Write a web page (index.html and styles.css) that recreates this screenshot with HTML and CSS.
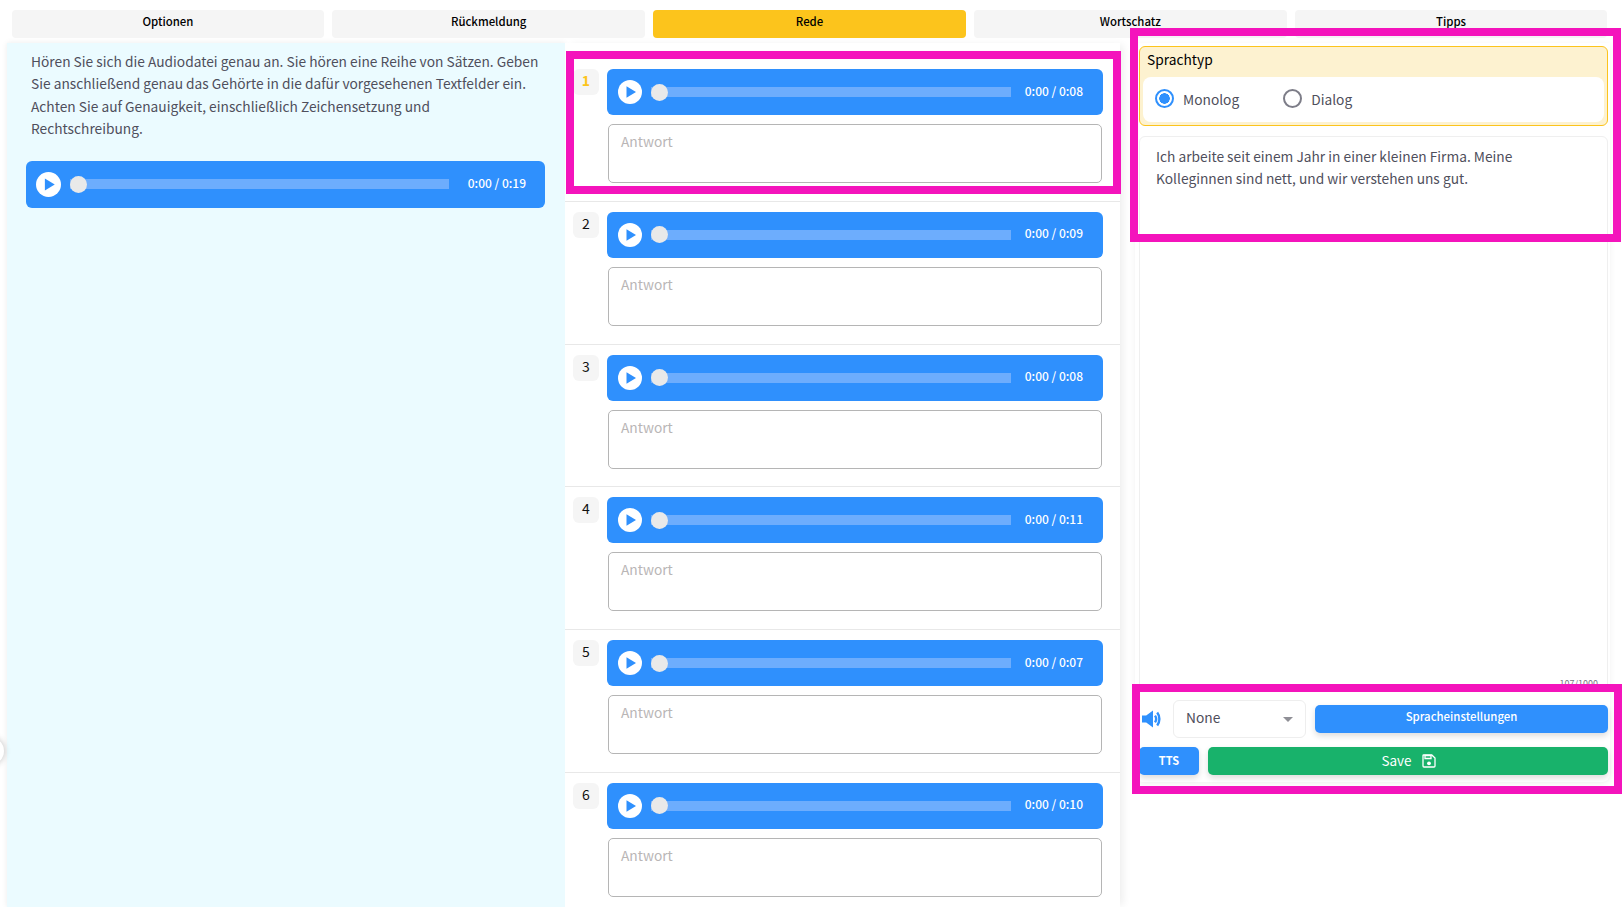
FILE: index.html
```html
<!DOCTYPE html>
<html lang="de">
<head>
<meta charset="utf-8">
<title>Rede</title>
<link rel="stylesheet" href="styles.css">
</head>
<body>
<nav class="tabs">
  <a class="tab">Optionen</a>
  <a class="tab">Rückmeldung</a>
  <a class="tab tab-active">Rede</a>
  <a class="tab">Wortschatz</a>
  <a class="tab">Tipps</a>
</nav>
<main class="layout">
  <section class="brief">
    <p class="brief-text">Hören Sie sich die Audiodatei genau an. Sie hören eine Reihe von Sätzen. Geben Sie anschließend genau das Gehörte in die dafür vorgesehenen Textfelder ein. Achten Sie auf Genauigkeit, einschließlich Zeichensetzung und Rechtschreibung.</p>
    <div class="player player-main">
      <span class="play"><svg viewBox="0 0 24 24"><path d="M8.5 6.2v11.6L18 12z"/></svg></span>
      <span class="track"><span class="thumb"></span></span>
      <span class="time">0:00 / 0:19</span>
    </div>
  </section>
  <section class="answers">
    <div class="row">
      <span class="num num-active">1</span>
      <div class="row-body">
        <div class="player"><span class="play"><svg viewBox="0 0 24 24"><path d="M8.5 6.2v11.6L18 12z"/></svg></span><span class="track"><span class="thumb"></span></span><span class="time">0:00 / 0:08</span></div>
        <textarea class="answer" placeholder="Antwort"></textarea>
      </div>
    </div>
    <div class="row">
      <span class="num">2</span>
      <div class="row-body">
        <div class="player"><span class="play"><svg viewBox="0 0 24 24"><path d="M8.5 6.2v11.6L18 12z"/></svg></span><span class="track"><span class="thumb"></span></span><span class="time">0:00 / 0:09</span></div>
        <textarea class="answer" placeholder="Antwort"></textarea>
      </div>
    </div>
    <div class="row">
      <span class="num">3</span>
      <div class="row-body">
        <div class="player"><span class="play"><svg viewBox="0 0 24 24"><path d="M8.5 6.2v11.6L18 12z"/></svg></span><span class="track"><span class="thumb"></span></span><span class="time">0:00 / 0:08</span></div>
        <textarea class="answer" placeholder="Antwort"></textarea>
      </div>
    </div>
    <div class="row">
      <span class="num">4</span>
      <div class="row-body">
        <div class="player"><span class="play"><svg viewBox="0 0 24 24"><path d="M8.5 6.2v11.6L18 12z"/></svg></span><span class="track"><span class="thumb"></span></span><span class="time">0:00 / 0:11</span></div>
        <textarea class="answer" placeholder="Antwort"></textarea>
      </div>
    </div>
    <div class="row">
      <span class="num">5</span>
      <div class="row-body">
        <div class="player"><span class="play"><svg viewBox="0 0 24 24"><path d="M8.5 6.2v11.6L18 12z"/></svg></span><span class="track"><span class="thumb"></span></span><span class="time">0:00 / 0:07</span></div>
        <textarea class="answer" placeholder="Antwort"></textarea>
      </div>
    </div>
    <div class="row">
      <span class="num">6</span>
      <div class="row-body">
        <div class="player"><span class="play"><svg viewBox="0 0 24 24"><path d="M8.5 6.2v11.6L18 12z"/></svg></span><span class="track"><span class="thumb"></span></span><span class="time">0:00 / 0:10</span></div>
        <textarea class="answer" placeholder="Antwort"></textarea>
      </div>
    </div>
  </section>
  <aside class="side">
    <div class="lang-card">
      <div class="lang-title">Sprachtyp</div>
      <div class="lang-options">
        <label class="radio radio-on"><span class="dot"></span>Monolog</label>
        <label class="radio"><span class="dot"></span>Dialog</label>
      </div>
    </div>
    <div class="script-box">
      <p class="script-text">Ich arbeite seit einem Jahr in einer kleinen Firma. Meine Kolleginnen sind nett, und wir verstehen uns gut.</p>
      <span class="counter">107/1000</span>
    </div>
    <div class="voice-row">
      <svg class="speaker" viewBox="0 0 20 18"><path d="M0 5.500h4.200L11 .5v17l-6.800-5H0z"/><path d="M13 5.600c1.500 2.100 1.500 4.700 0 6.800" class="wave"/><path d="M15.200 2.600c2.900 3.700 2.900 9.100 0 12.800" class="wave"/></svg>
      <div class="select"><span>None</span><span class="caret"></span></div>
      <button class="btn btn-settings">Spracheinstellungen</button>
    </div>
    <div class="action-row">
      <button class="btn btn-tts">TTS</button>
      <button class="btn btn-save">Save
        <svg class="save-icon" viewBox="0 0 14 14"><path d="M1.6 1h8.2L13 4v8a1 1 0 0 1-1 1H2a1 1 0 0 1-1-1V1.600A.6.6 0 0 1 1.600 1z" class="save-line"/><path d="M3 1.500h6v3H3z" class="save-line"/><circle cx="7" cy="9.300" r="1.900" class="save-fill"/></svg>
      </button>
    </div>
  </aside>
</main>
<span class="handle"></span>
<div class="mark mark-row"></div>
<div class="mark mark-type"></div>
<div class="mark mark-voice"></div>
</body>
</html>
```
FILE: styles.css
```css
* { box-sizing: border-box; }
html, body { margin: 0; padding: 0; }
body {
  position: relative;
  width: 1622px;
  height: 907px;
  overflow: hidden;
  background: #fff;
  font-family: "Noto Sans CJK JP", "Noto Sans", sans-serif;
  font-size: 13.75px;
  color: #4f4f5c;
}
.tabs {
  display: flex;
  gap: 8px;
  height: 38px;
  padding: 10px 14.500px 0 11.500px;
}
.tab {
  flex: 1;
  height: 28px;
  padding-bottom: 6px;
  display: flex;
  align-items: center;
  justify-content: center;
  background: #f5f5f5;
  border-radius: 4px;
  color: #000;
  font-size: 11.4px;
  font-weight: 500;
}
.tab-active { background: #fcc41c; }
.layout {
  display: flex;
  height: 864px;
  margin-top: 5px;
  padding-left: 7px;
}
.brief {
  width: 558px;
  flex: none;
  padding: 7px 20px 0 19px;
  background: #ebfbff;
  box-shadow: 0 0 6px rgba(0, 0, 0, .08);
}
.brief-text {
  margin: 0 0 21px;
  padding: 0 4px 0 5px;
  line-height: 22.4px;
}
.player {
  display: flex;
  align-items: center;
  height: 46px;
  padding: 0 20px 0 11px;
  background: #2f90fd;
  border-radius: 6px;
}
.player-main { height: 47px; padding: 0 19px 0 10px; }
.play {
  flex: none;
  width: 24px;
  height: 24px;
  border-radius: 50%;
  background: #fff;
}
.play svg { display: block; width: 24px; height: 24px; fill: #2f90fd; }
.player-main .play { width: 25px; height: 25px; }
.player-main .play svg { width: 25px; height: 25px; }
.track {
  flex: 1;
  display: flex;
  align-items: center;
  height: 10px;
  margin-left: 9px;
  background: #6dadfd;
}
.thumb {
  width: 17px;
  height: 17px;
  border-radius: 50%;
  background: #e9e9e9;
}
.time {
  flex: none;
  margin: -4px 0 0 14px;
  color: #fff;
  font-size: 12px;
  font-weight: 500;
}
.player-main .time { margin-left: 19px; }
.answers {
  position: relative;
  width: 555px;
  flex: none;
  padding-top: 16px;
  background: #fff;
  box-shadow: 5px 0 8px -2px rgba(0, 0, 0, .07);
}
.row {
  display: flex;
  gap: 8px;
  padding: 10px 17px 17.800px 8px;
  border-bottom: 1px solid #e8e8e8;
}
.num {
  flex: none;
  width: 26px;
  height: 26px;
  padding-bottom: 4px;
  display: flex;
  align-items: center;
  justify-content: center;
  border-radius: 6px;
  background: #f5f5f5;
  color: #111;
  font-size: 14px;
}
.num-active { color: #fcc41c; font-weight: 700; }
.row-body { flex: 1; display: flex; flex-direction: column; gap: 9px; }
.answer {
  display: block;
  width: 494px;
  height: 59px;
  margin-left: 1px;
  padding: 6px 12px;
  border: 1px solid #b5b5b5;
  border-radius: 5px;
  background: #fff;
  font: 13.75px/20px "Noto Sans CJK JP", "Noto Sans", sans-serif;
  resize: none;
  outline: none;
}
.answer::placeholder { color: #b9b6b6; opacity: 1; }
.side {
  width: 475px;
  flex: none;
  height: 739px;
  margin-left: 15px;
  padding: 3px 2px 7px 4px;
  display: flex;
  flex-direction: column;
  background: #fff;
  border-radius: 0 0 8px 8px;
  box-shadow: 0 2px 6px rgba(0, 0, 0, .06);
}
.lang-card {
  flex: none;
  height: 80px;
  padding: 0 3px 3px 3px;
  background: #fdf2d0;
  border: 1px solid #fcc41c;
  border-radius: 6px;
  display: flex;
  flex-direction: column;
}
.lang-title {
  height: 30px;
  padding: 0 0 0 4px;
  color: #000;
  line-height: 25px;
}
.lang-options {
  flex: 1;
  display: flex;
  align-items: center;
  gap: 44px;
  padding-left: 12px;
  background: #fff;
  border-radius: 8px;
}
.radio { display: flex; align-items: center; gap: 9px; margin-top: -2px; }
.dot {
  width: 19px;
  height: 19px;
  border: 2px solid #7d7d88;
  border-radius: 50%;
}
.radio-on .dot {
  border-color: #2f90fd;
  background: radial-gradient(circle, #2f90fd 0 5px, #fff 5.500px);
}
.script-box {
  position: relative;
  flex: 1;
  margin-top: 10px;
  padding: 8px 16px;
  border: 1px solid #efefef;
  border-radius: 6px;
}
.script-text { margin: 0; line-height: 22.4px; }
.counter {
  position: absolute;
  right: 9px;
  bottom: 1px;
  font-size: 9px;
  color: #77777f;
}
.voice-row {
  flex: none;
  display: flex;
  align-items: center;
  margin-top: 8px;
}
.speaker { flex: none; width: 20px; height: 18px; margin: 0 11px 0 3px; fill: #2f90fd; }
.speaker .wave { fill: none; stroke: #2f90fd; stroke-width: 2.400; }
.select {
  flex: none;
  width: 133px;
  height: 38px;
  display: flex;
  align-items: center;
  justify-content: space-between;
  padding: 0 12px 4px;
  border: 1px solid #eee;
  border-radius: 6px;
}
.caret {
  width: 0;
  height: 0;
  margin: 4px 0 0 0;
  border: 5px solid transparent;
  border-top: 5px solid #8f8f96;
  border-bottom: 0;
}
.btn {
  height: 28px;
  border: 0;
  border-radius: 5px;
  color: #fff;
  font-family: "Noto Sans CJK JP", "Noto Sans", sans-serif;
  box-shadow: 0 3px 6px rgba(0, 0, 0, .14);
}
.btn-settings {
  flex: 1;
  margin-left: 9px;
  padding: 0 0 6px;
  background: #2f90fd;
  font-size: 11.4px;
  font-weight: 500;
}
.action-row { flex: none; display: flex; gap: 9px; margin-top: 9px; }
.btn-tts {
  flex: none;
  width: 60px;
  padding: 0 0 3px;
  background: #2f90fd;
  font-size: 11px;
  font-weight: 700;
}
.btn-save {
  flex: 1;
  display: flex;
  align-items: center;
  justify-content: center;
  gap: 10px;
  padding: 0 0 3px 1px;
  background: #18b26b;
  font-size: 13.5px;
  font-weight: 400;
}
.save-icon { width: 14px; height: 14px; margin-top: 3px; }
.save-line { fill: none; stroke: #fff; stroke-width: 1.300; }
.save-fill { fill: #fff; }
.handle {
  position: absolute;
  left: -24px;
  top: 737px;
  width: 28px;
  height: 28px;
  border-radius: 50%;
  background: #fff;
  box-shadow: 0 0 6px rgba(0, 0, 0, .25);
}
.mark {
  position: absolute;
  border: 8px solid #f414bc;
  pointer-events: none;
}
.mark-row { left: 566px; top: 51px; width: 555px; height: 143px; }
.mark-type { left: 1130px; top: 28px; width: 491px; height: 214px; }
.mark-voice { left: 1132px; top: 684px; width: 490px; height: 110px; }
```
